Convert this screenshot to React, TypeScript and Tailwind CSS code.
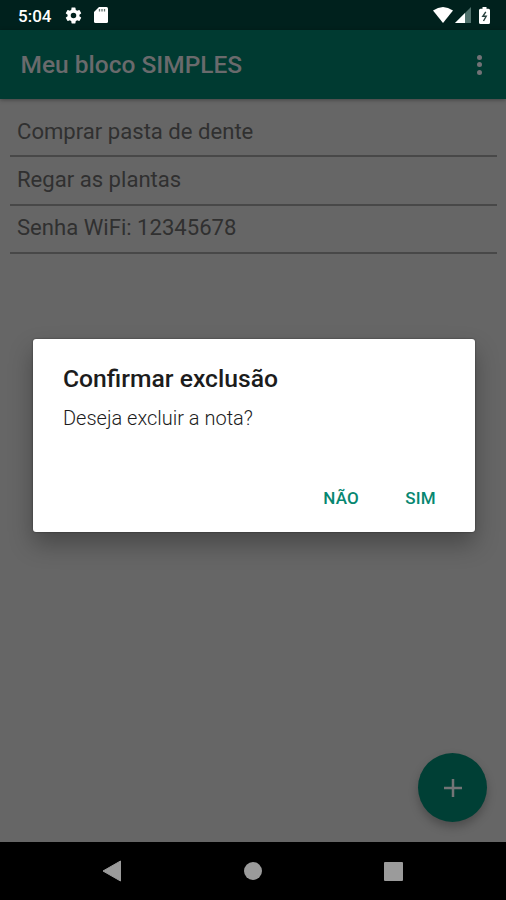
import React from "react";

const notes = ["Comprar pasta de dente", "Regar as plantas", "Senha WiFi: 12345678"];

function StatusBar() {
  return (
    <div className="flex h-[30px] shrink-0 items-center justify-between bg-[#00211d] pl-[18px] pr-[16px]">
      <div className="flex items-center">
        <span className="mt-[2px] w-[46px] text-[17px] leading-none font-medium text-white">5:04</span>
        <svg width="19" height="19" viewBox="0 0 24 24" fill="#fff">
          <path d="M19.43 12.98c.04-.32.07-.64.07-.98s-.03-.66-.07-.98l2.11-1.65c.19-.15.24-.42.12-.64l-2-3.46c-.12-.22-.39-.3-.61-.22l-2.49 1c-.52-.4-1.08-.73-1.69-.98l-.38-2.65A.49.49 0 0 0 14 2h-4c-.25 0-.46.18-.49.42l-.38 2.65c-.61.25-1.17.59-1.69.98l-2.49-1c-.23-.09-.49 0-.61.22l-2 3.46c-.13.22-.07.49.12.64l2.11 1.65c-.04.32-.07.65-.07.98s.03.66.07.98l-2.11 1.65c-.19.15-.24.42-.12.64l2 3.46c.12.22.39.3.61.22l2.49-1c.52.4 1.08.73 1.69.98l.38 2.65c.03.24.24.42.49.42h4c.25 0 .46-.18.49-.42l.38-2.65c.61-.25 1.17-.59 1.69-.98l2.49 1c.23.09.49 0 .61-.22l2-3.460c.12-.22.07-.49-.12-.64zM12 15.5a3.5 3.5 0 1 1 0-7 3.500 3.500 0 0 1 0 7z" />
        </svg>
        <svg className="ml-[11px]" width="14" height="16" viewBox="0 0 14 16">
          <path d="M5 0H12.500Q14 0 14 1.500V14.500Q14 16 12.500 16H1.500Q0 16 0 14.500V5Z" fill="#fff" />
          <path d="M5.500 2V4.500M8 2V4.500M10.500 2V4.500" stroke="#60716e" strokeWidth="1.300" />
        </svg>
      </div>
      <div className="flex items-center">
        <svg width="20" height="16" viewBox="0 0 20 16">
          <path d="M0 3.600Q10 -3.400 20 3.600L10 16Z" fill="#fff" />
        </svg>
        <svg className="ml-[2px]" width="16" height="16" viewBox="0 0 16 16">
          <path d="M16 0V16H0Z" fill="#50716c" />
          <path d="M10 6V16H0Z" fill="#fff" />
        </svg>
        <svg className="ml-[8px]" width="11" height="17" viewBox="0 0 11 17">
          <path d="M3.500 0h4v1.800H9.500Q11 1.800 11 3.300V15.500Q11 17 9.500 17h-8Q0 17 0 15.500V3.300Q0 1.800 1.500 1.800h2Z" fill="#fff" />
          <path d="M6.800 4.800L3.800 9.300H7.200L4.500 14" fill="none" stroke="#28423f" strokeWidth="1.400" />
        </svg>
      </div>
    </div>
  );
}

function AppBar() {
  return (
    <header className="flex h-[69px] shrink-0 items-center justify-between bg-[#003a31] pr-[24px] pl-[20.500px] shadow-[0_1px_4px_rgba(0,0,0,0.35)]">
      <h1 className="mt-[2px] text-[24.500px] font-medium text-[#6a6a6c]">Meu bloco SIMPLES</h1>
      <div className="flex flex-col gap-[2.500px]">
        <span className="size-[5px] rounded-full bg-[#727276]" />
        <span className="size-[5px] rounded-full bg-[#727276]" />
        <span className="size-[5px] rounded-full bg-[#727276]" />
      </div>
    </header>
  );
}

function Dialog() {
  return (
    <div
      role="dialog"
      className="absolute top-[339px] left-[33px] flex h-[193px] w-[442px] flex-col rounded-[3px] bg-white px-[30px] shadow-[0_12px_24px_rgba(0,0,0,0.3),0_0_2px_rgba(0,0,0,0.5)]"
    >
      <h2 className="mt-[25px] text-[24.700px] leading-[30px] font-medium whitespace-nowrap text-[#1c1c1c]">Confirmar exclusão</h2>
      <p className="mt-[12px] text-[20px] leading-[24px] font-light text-[#1c1c1c]">Deseja excluir a nota?</p>
      <div className="mt-[56px] flex justify-end gap-[46px] pr-[9px] text-[17px] leading-[24px] font-medium text-[#078771]">
        <button className="tracking-[0.3px]">NÃO</button>
        <button className="tracking-[0.3px]">SIM</button>
      </div>
    </div>
  );
}

export default function App() {
  return (
    <div className="relative flex h-[900px] w-[506px] flex-col overflow-hidden bg-[#666666] font-[Roboto,sans-serif]">
      <StatusBar />
      <AppBar />
      <main className="flex flex-1 flex-col pt-[10px] pr-[9px] pl-[10px]">
        <ul>
          {notes.map((note) => (
            <li key={note} className="flex h-[48.300px] items-center border-b-2 border-[#484848] pb-[2px] pl-[7px] text-[22.100px] text-[#303030]">
              {note}
            </li>
          ))}
        </ul>
      </main>
      <nav className="flex h-[58px] shrink-0 items-center bg-black pl-[102px]">
        <svg width="20" height="22" viewBox="0 0 20 22">
          <path d="M1 11L18.500 1V21Z" fill="#9b9b9b" stroke="#9b9b9b" strokeLinejoin="round" />
        </svg>
        <span className="ml-[122px] size-[18px] rounded-full bg-[#9b9b9b]" />
        <span className="ml-[122px] size-[19px] rounded-[1px] bg-[#9b9b9b]" />
      </nav>
      <button className="absolute top-[753px] left-[418px] flex size-[69px] items-center justify-center rounded-full bg-[#003f35] shadow-[0_5px_10px_rgba(0,0,0,0.25)]">
        <svg width="18" height="18" viewBox="0 0 18 18">
          <path d="M9 0V18M0 9H18" stroke="#727476" strokeWidth="2.500" />
        </svg>
      </button>
      <Dialog />
    </div>
  );
}
